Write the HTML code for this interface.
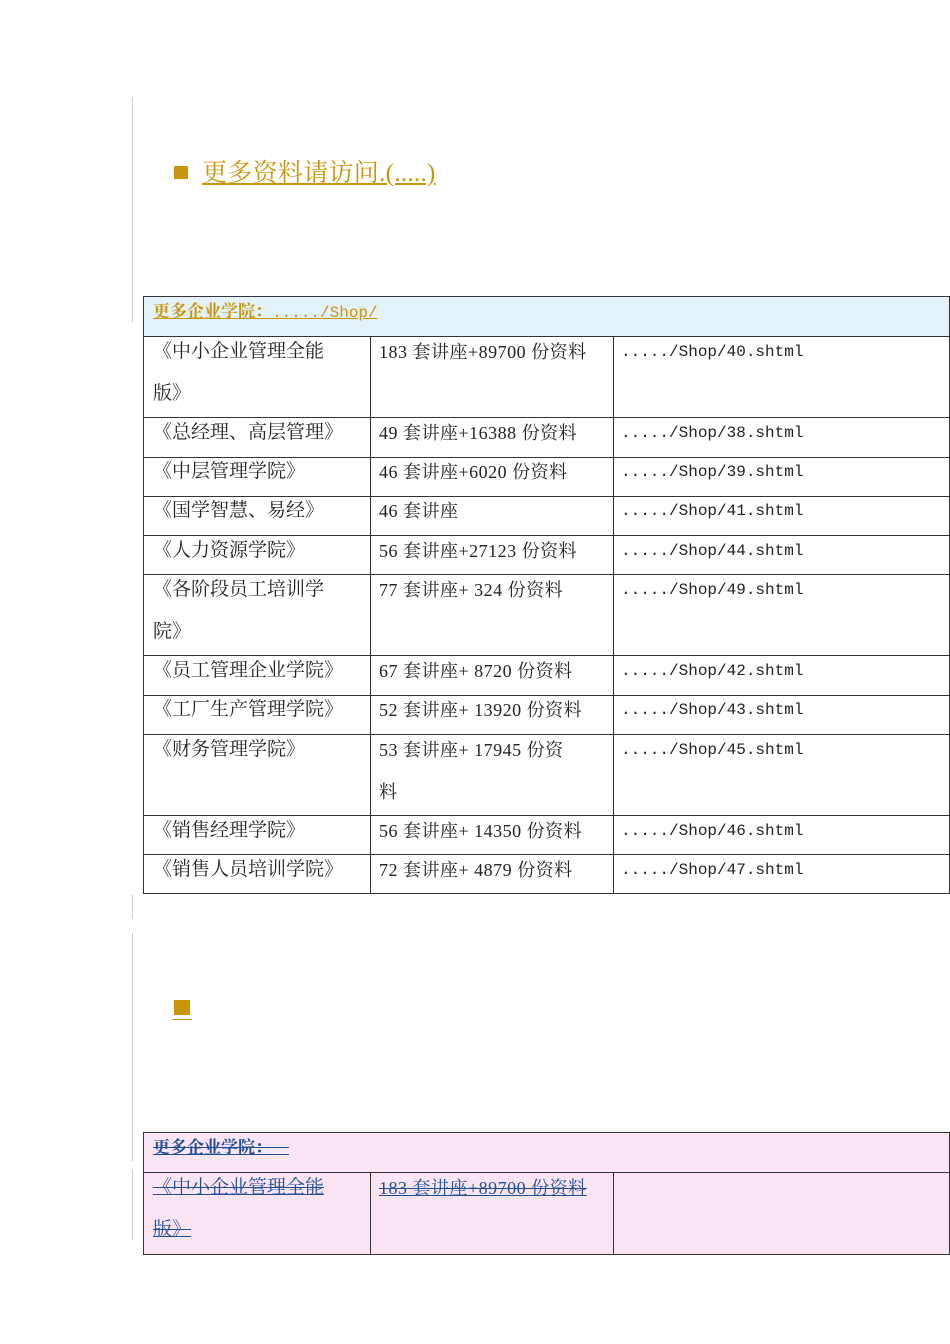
<!DOCTYPE html><html><head><meta charset="utf-8"><style>
body{margin:0;width:950px;height:1344px;background:#fff;position:relative;font-family:"Liberation Serif","Noto Serif CJK SC",serif;overflow:hidden}
.a{position:absolute;white-space:nowrap;font-size:18px;color:#222;line-height:20px}
.c{font-size:19px}
.n{letter-spacing:0.5px}
.m{font-family:"Liberation Mono","Noto Serif CJK SC",monospace;font-size:16px;letter-spacing:0}
.h{position:absolute;height:1px;background:#333}
.v{position:absolute;width:1px;background:#333}
.g{position:absolute;width:1px;background:#ccc;left:132px}
.gold{color:#c8960c;text-decoration:underline}
.blue{color:#1f4e99;text-decoration:underline line-through}
</style></head><body>
<div class="g" style="top:97px;height:225px"></div>
<div class="g" style="top:895px;height:24px"></div>
<div class="g" style="top:933px;height:228px"></div>
<div class="g" style="top:1170px;height:70px"></div>

<div style="position:absolute;left:174px;top:166px;width:14px;height:13px;background:#c8960c"></div>
<div class="a gold" style="left:202px;top:159px;font-size:25px;line-height:30px;letter-spacing:0.3px">更多资料请访问.(.....)</div>

<div style="position:absolute;left:143px;top:296px;width:806px;height:40px;background:#e3f1f8"></div>
<div class="h" style="left:143px;top:296px;width:807px"></div>
<div class="a gold" style="left:153px;top:302px;font-weight:bold;font-size:17px">更多企业学院：<span class="m" style="font-weight:normal">...../Shop/</span></div>
<div class="h" style="left:143px;top:336px;width:807px"></div>
<div class="h" style="left:143px;top:417px;width:807px"></div>
<div class="h" style="left:143px;top:457px;width:807px"></div>
<div class="h" style="left:143px;top:496px;width:807px"></div>
<div class="h" style="left:143px;top:535px;width:807px"></div>
<div class="h" style="left:143px;top:574px;width:807px"></div>
<div class="h" style="left:143px;top:655px;width:807px"></div>
<div class="h" style="left:143px;top:695px;width:807px"></div>
<div class="h" style="left:143px;top:734px;width:807px"></div>
<div class="h" style="left:143px;top:815px;width:807px"></div>
<div class="h" style="left:143px;top:854px;width:807px"></div>
<div class="h" style="left:143px;top:893px;width:807px"></div>
<div class="v" style="left:143px;top:296px;height:598px"></div>
<div class="v" style="left:949px;top:296px;height:598px"></div>
<div class="v" style="left:370px;top:336px;height:558px"></div>
<div class="v" style="left:613px;top:336px;height:558px"></div>

<div class="a c" style="left:153px;top:342px">《中小企业管理全能</div><div class="a c" style="left:153px;top:384px">版》</div>
<div class="a n" style="left:379px;top:342px">183 套讲座+89700 份资料</div><div class="a m" style="left:621px;top:342px">...../Shop/40.shtml</div>
<div class="a c" style="left:153px;top:423px">《总经理、高层管理》</div><div class="a n" style="left:379px;top:423px">49 套讲座+16388 份资料</div><div class="a m" style="left:621px;top:423px">...../Shop/38.shtml</div>
<div class="a c" style="left:153px;top:462px">《中层管理学院》</div><div class="a n" style="left:379px;top:462px">46 套讲座+6020 份资料</div><div class="a m" style="left:621px;top:462px">...../Shop/39.shtml</div>
<div class="a c" style="left:153px;top:501px">《国学智慧、易经》</div><div class="a n" style="left:379px;top:501px">46 套讲座</div><div class="a m" style="left:621px;top:501px">...../Shop/41.shtml</div>
<div class="a c" style="left:153px;top:541px">《人力资源学院》</div><div class="a n" style="left:379px;top:541px">56 套讲座+27123 份资料</div><div class="a m" style="left:621px;top:541px">...../Shop/44.shtml</div>
<div class="a c" style="left:153px;top:580px">《各阶段员工培训学</div><div class="a c" style="left:153px;top:622px">院》</div>
<div class="a n" style="left:379px;top:580px">77 套讲座+ 324 份资料</div><div class="a m" style="left:621px;top:580px">...../Shop/49.shtml</div>
<div class="a c" style="left:153px;top:661px">《员工管理企业学院》</div><div class="a n" style="left:379px;top:661px">67 套讲座+ 8720 份资料</div><div class="a m" style="left:621px;top:661px">...../Shop/42.shtml</div>
<div class="a c" style="left:153px;top:700px">《工厂生产管理学院》</div><div class="a n" style="left:379px;top:700px">52 套讲座+ 13920 份资料</div><div class="a m" style="left:621px;top:700px">...../Shop/43.shtml</div>
<div class="a c" style="left:153px;top:740px">《财务管理学院》</div><div class="a n" style="left:379px;top:740px">53 套讲座+ 17945 份资</div><div class="a" style="left:379px;top:782px">料</div><div class="a m" style="left:621px;top:740px">...../Shop/45.shtml</div>
<div class="a c" style="left:153px;top:821px">《销售经理学院》</div><div class="a n" style="left:379px;top:821px">56 套讲座+ 14350 份资料</div><div class="a m" style="left:621px;top:821px">...../Shop/46.shtml</div>
<div class="a c" style="left:153px;top:860px">《销售人员培训学院》</div><div class="a n" style="left:379px;top:860px">72 套讲座+ 4879 份资料</div><div class="a m" style="left:621px;top:860px">...../Shop/47.shtml</div>

<div style="position:absolute;left:174px;top:1000px;width:16px;height:15px;background:#c8960c"></div>
<div style="position:absolute;left:172px;top:1019px;width:20px;height:1px;background:#c8960c"></div>

<div style="position:absolute;left:143px;top:1132px;width:806px;height:122px;background:#fbe4f4"></div>
<div class="h" style="left:143px;top:1132px;width:807px"></div>
<div class="h" style="left:143px;top:1172px;width:807px"></div>
<div class="h" style="left:143px;top:1254px;width:807px"></div>
<div class="v" style="left:143px;top:1132px;height:123px"></div>
<div class="v" style="left:949px;top:1132px;height:123px"></div>
<div class="v" style="left:370px;top:1172px;height:83px"></div>
<div class="v" style="left:613px;top:1172px;height:83px"></div>
<div class="a blue" style="left:153px;top:1138px;font-weight:bold;font-size:17px">更多企业学院：<span style="font-weight:normal">&nbsp;&nbsp;&nbsp;&nbsp;</span></div>
<div class="a blue c" style="left:153px;top:1178px">《中小企业管理全能</div><div class="a blue c" style="left:153px;top:1220px">版》</div>
<div class="a blue n" style="left:379px;top:1178px">183 套讲座+89700 份资料</div>
</body></html>
